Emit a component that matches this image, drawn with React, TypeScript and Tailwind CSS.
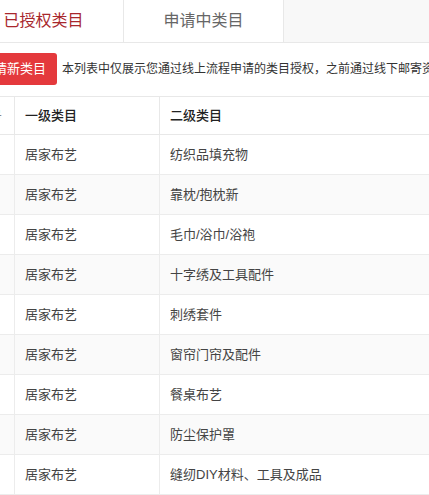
import React from "react";

const rows = [
  "纺织品填充物",
  "靠枕/抱枕新",
  "毛巾/浴巾/浴袍",
  "十字绣及工具配件",
  "刺绣套件",
  "窗帘门帘及配件",
  "餐桌布艺",
  "防尘保护罩",
  "缝纫DIY材料、工具及成品",
];

export default function App() {
  return (
    <div
      className="w-[429px] h-[495px] overflow-hidden bg-white text-[#333]"
      style={{ fontFamily: '"Liberation Sans", "Noto Sans CJK SC", sans-serif' }}
    >
      <div className="flex h-[43px] border-b border-[#e8e8e8] bg-[#f8f8f8]">
        <div className="ml-[-36px] w-[160px] shrink-0 bg-white border-r border-[#e8e8e8] flex items-center justify-center text-[16px] text-[#a8272d]">
          已授权类目
        </div>
        <div className="w-[160px] shrink-0 bg-white border-r border-[#e8e8e8] flex items-center justify-center text-[16px] text-[#666]">
          申请中类目
        </div>
        <div className="flex-1" />
      </div>

      <div className="mt-[10px] flex items-center h-[32px] whitespace-nowrap">
        <div className="ml-[-30px] h-[32px] shrink-0 px-[11px] rounded-[3px] bg-[#e4393c] text-white text-[13px] flex items-center">
          申请新类目
        </div>
        <div className="ml-[5px] text-[12px] text-[#333]">
          本列表中仅展示您通过线上流程申请的类目授权，之前通过线下邮寄资质申请的类目授权请联系对接人员查询
        </div>
      </div>

      <div className="mt-[11px] border-t border-[#e8e8e8]">
        <div className="flex h-[38px] border-b border-[#e8e8e8] text-[13px] font-medium text-[#222]">
          <div className="w-[15px] shrink-0 border-r border-[#e8e8e8] overflow-hidden flex items-center">
            <span className="ml-[-24px] whitespace-nowrap text-[#888]">序号</span>
          </div>
          <div className="w-[145px] shrink-0 border-r border-[#e8e8e8] pl-[10px] flex items-center">
            一级类目
          </div>
          <div className="flex-1 pl-[10px] flex items-center">二级类目</div>
        </div>
        {rows.map((r, i) => (
          <div
            key={r}
            className={
              i % 2 === 1
                ? "flex h-[40px] border-b border-[#ececec] text-[13px] text-[#444] bg-[#fafafa]"
                : "flex h-[40px] border-b border-[#ececec] text-[13px] text-[#444] bg-white"
            }
          >
            <div className="w-[15px] shrink-0 border-r border-[#ececec]" />
            <div className="w-[145px] shrink-0 border-r border-[#ececec] pl-[10px] flex items-center">
              居家布艺
            </div>
            <div className="flex-1 pl-[10px] flex items-center">{r}</div>
          </div>
        ))}
      </div>
    </div>
  );
}
